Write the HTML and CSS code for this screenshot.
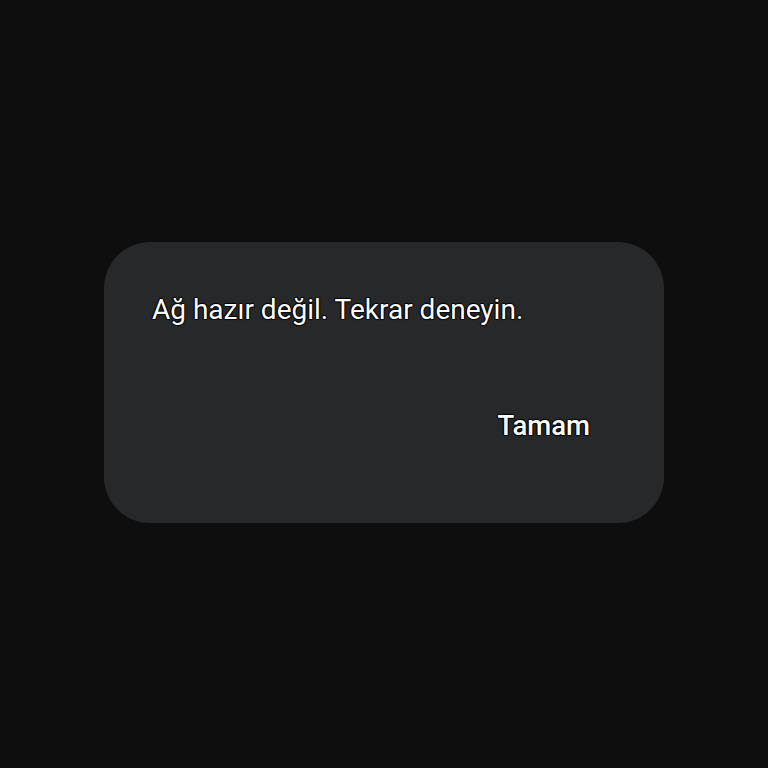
FILE: index.html
```html
<!DOCTYPE html>
<html lang="tr">
<head>
<meta charset="utf-8">
<link rel="stylesheet" href="styles.css">
</head>
<body>
<div class="screen">
  <div class="dialog">
    <p class="message">Ağ hazır değil. Tekrar deneyin.</p>
    <div class="actions">
      <span class="btn">Tamam</span>
    </div>
  </div>
</div>
</body>
</html>
```
FILE: styles.css
```css
html, body {
  margin: 0;
  padding: 0;
  background: #0e0e0e;
}
.screen {
  width: 768px;
  height: 768px;
  display: flex;
  align-items: center;
  justify-content: center;
}
.dialog {
  box-sizing: border-box;
  width: 560px;
  height: 281px;
  margin-top: -3px;
  background: #27282a;
  border-radius: 46px;
  padding: 50px 74px 0 48px;
  display: flex;
  flex-direction: column;
  font-family: Roboto, "Noto Sans", sans-serif;
  color: #ffffff;
}
.message {
  margin: 0;
  font-size: 28px;
  line-height: 36px;
  text-shadow: 0 0 1px #000, 1px 0 1px #000, -1px 0 1px #000, 0 1px 1px #000, 0 -1px 1px #000;
}
.actions {
  display: flex;
  justify-content: flex-end;
  margin-top: 80px;
}
.btn {
  font-size: 27.5px;
  font-weight: 500;
  line-height: 36px;
  text-shadow: 0 0 1px #000, 1px 0 1px #000, -1px 0 1px #000, 0 1px 1px #000, 0 -1px 1px #000;
}
```
